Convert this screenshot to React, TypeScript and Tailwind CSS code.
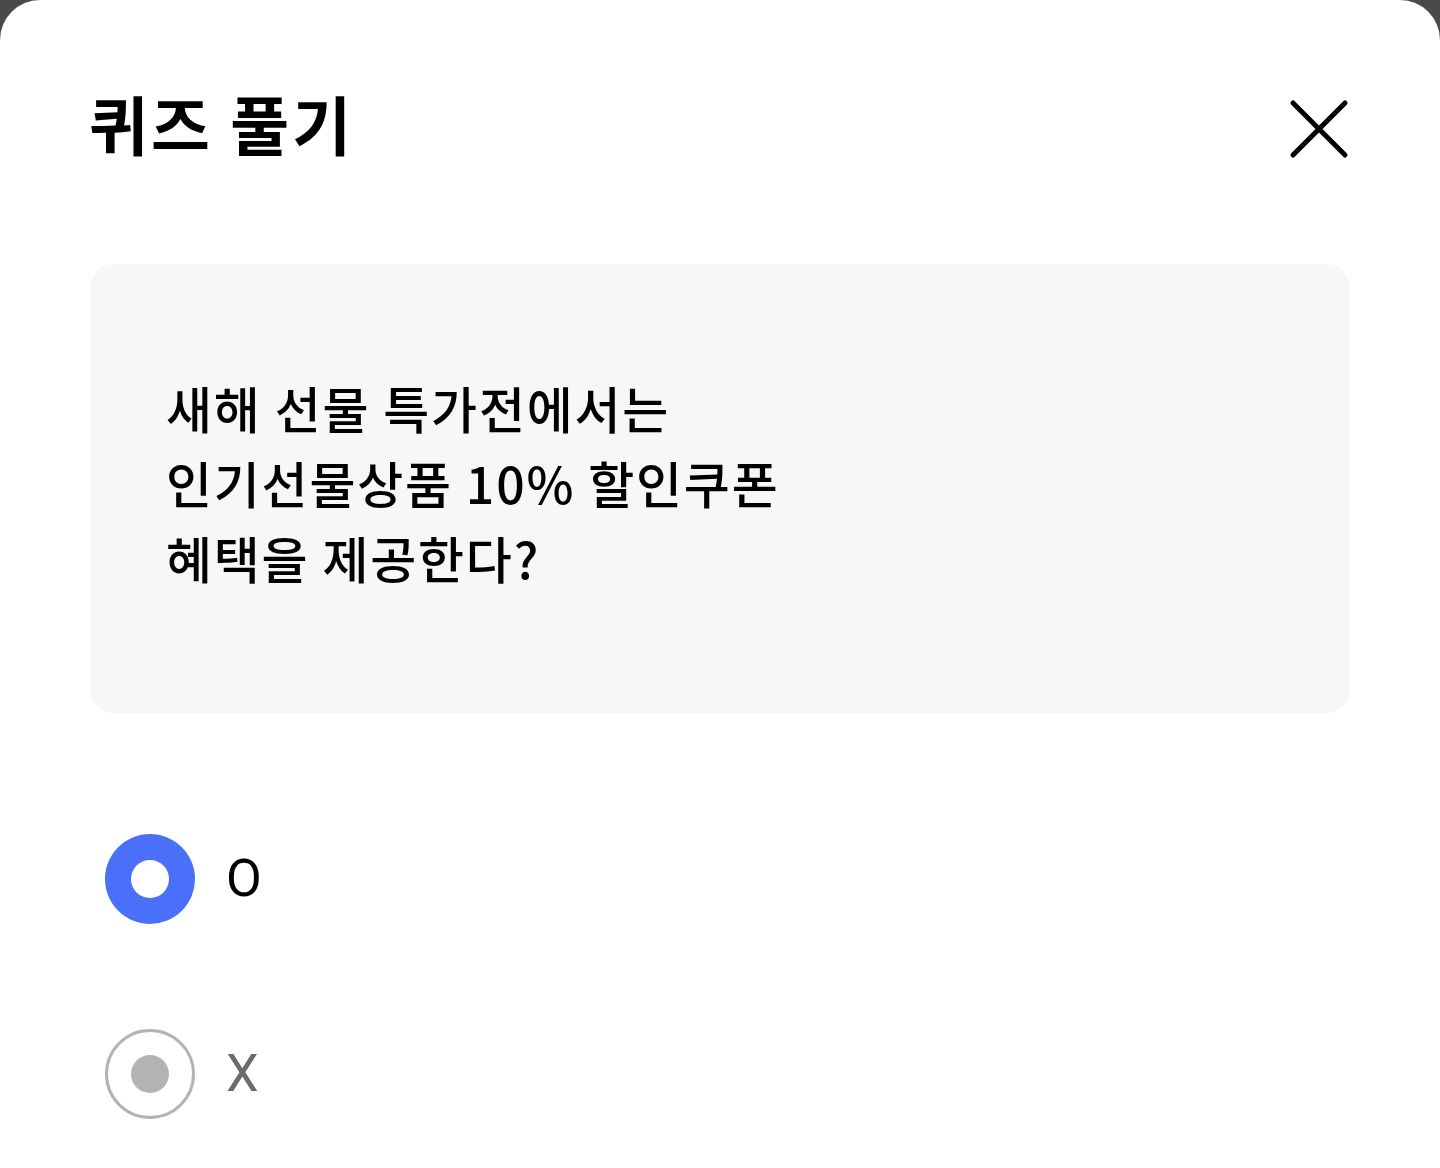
import React from "react";

export default function App() {
  const font = { fontFamily: '"Noto Sans CJK KR", "Noto Sans", sans-serif' };
  return (
    <div className="w-[1440px] h-[1168px] bg-[#4a4a4a] overflow-hidden" style={font}>
      <div className="w-full h-full bg-white rounded-t-[40px] px-[90px] flex flex-col">
        <div className="flex items-start justify-between h-[254px]">
          <h1 className="mt-[90px] -ml-[1px] text-[64px] font-bold text-black leading-none tracking-[3px]">
            퀴즈 풀기
          </h1>
          <button className="mt-[98px] w-[62px] h-[62px] flex items-center justify-center">
            <svg width="62" height="62" viewBox="0 0 62 62" fill="none">
              <path d="M5 5 L57 57 M57 5 L5 57" stroke="#000" strokeWidth="5" strokeLinecap="round" />
            </svg>
          </button>
        </div>
        <div className="mt-[10px] h-[449px] bg-[#f7f7f7] rounded-[24px] pl-[76px] flex items-center">
          <p className="text-[50px] font-medium text-black leading-[75px] tracking-[1.8px] -mt-[12px]">
            새해 선물 특가전에서는
            <br />
            인기선물상품 10% 할인쿠폰
            <br />
            혜택을 제공한다?
          </p>
        </div>
        <div className="mt-[121px] flex flex-col gap-[105px] pl-[15px]">
          <label className="flex items-center gap-[31px] h-[90px]">
            <span className="w-[90px] h-[90px] rounded-full bg-[#4a70fa] flex items-center justify-center">
              <span className="w-[38px] h-[38px] rounded-full bg-white" />
            </span>
            <span className="text-[52px] text-black leading-none" style={{ fontFamily: 'Roboto, "Noto Sans", sans-serif' }}>
              O
            </span>
          </label>
          <label className="flex items-center gap-[31px] h-[90px]">
            <span className="w-[90px] h-[90px] rounded-full border-[3px] border-[#b3b3b3] flex items-center justify-center">
              <span className="w-[38px] h-[38px] rounded-full bg-[#b3b3b3]" />
            </span>
            <span className="text-[52px] text-[#6b6b6b] leading-none" style={{ fontFamily: 'Roboto, "Noto Sans", sans-serif' }}>
              X
            </span>
          </label>
        </div>
      </div>
    </div>
  );
}
